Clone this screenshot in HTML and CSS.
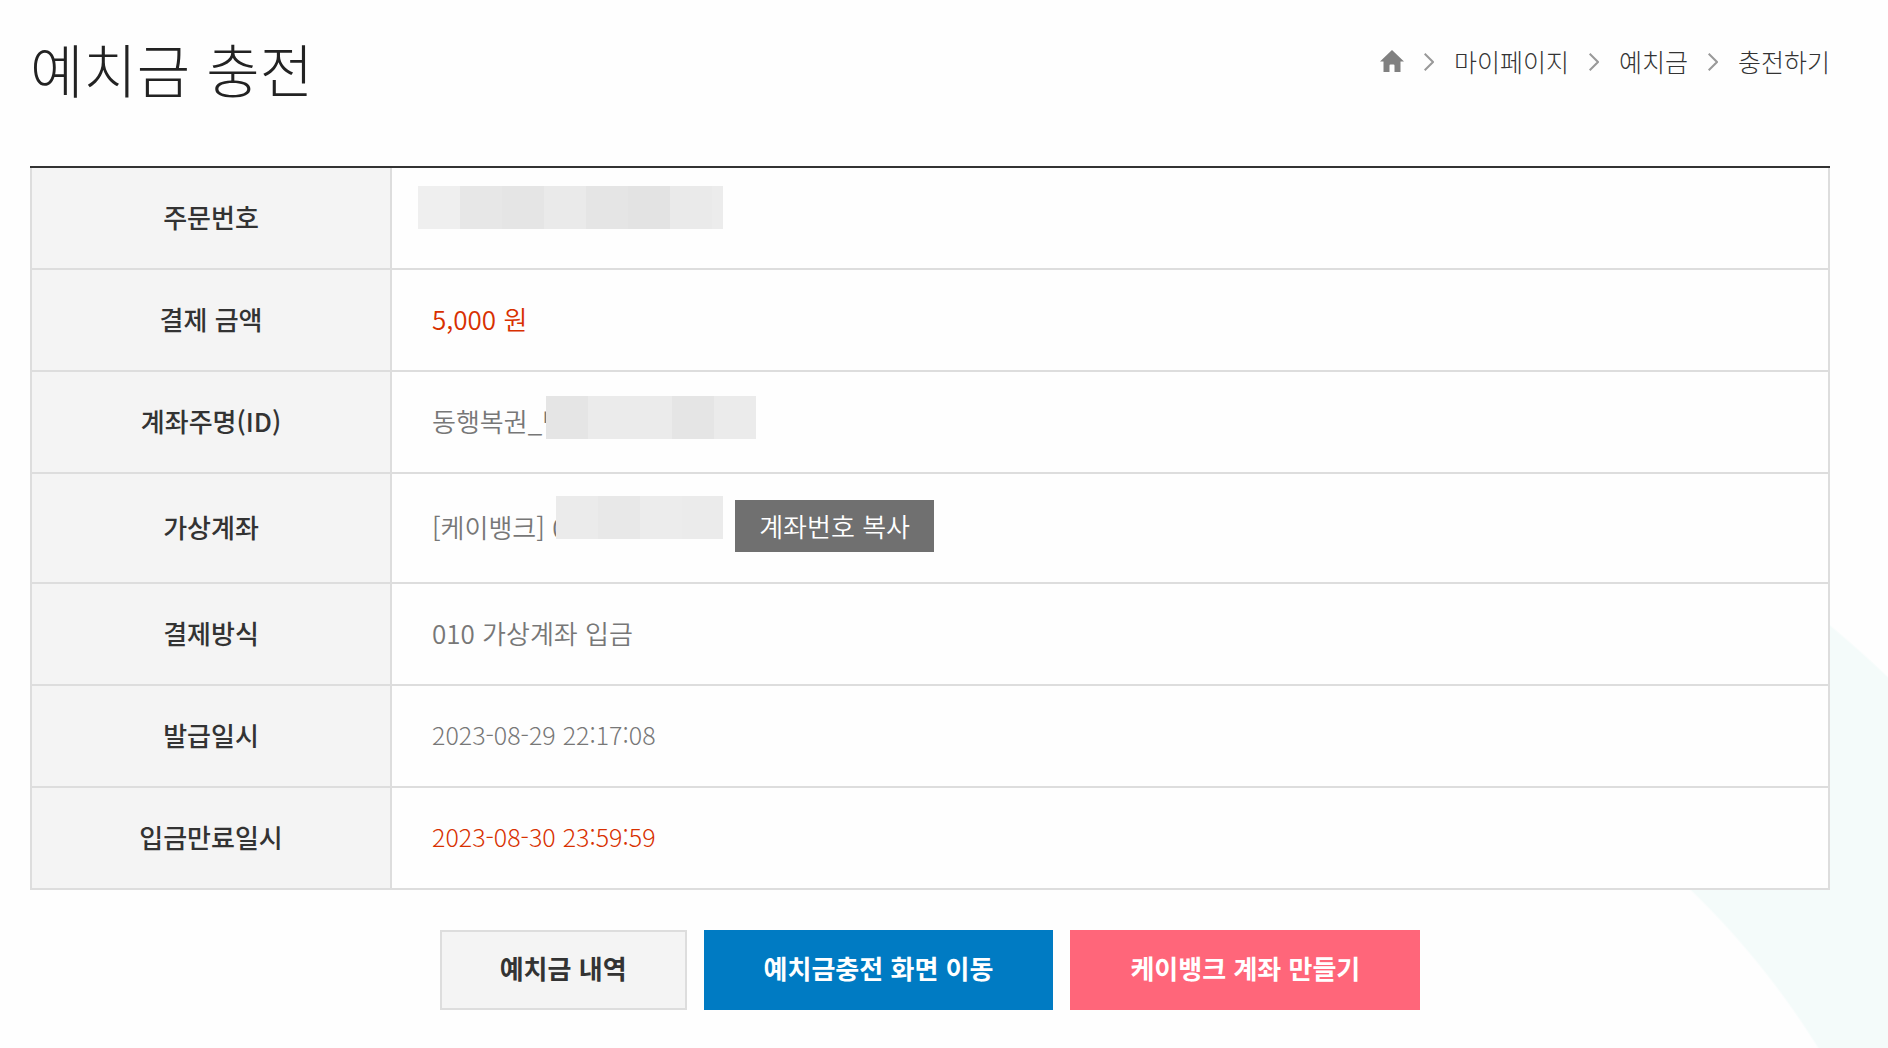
FILE: index.html
```html
<!DOCTYPE html>
<html lang="ko">
<head>
  <meta charset="UTF-8" />
  <meta name="viewport" content="width=device-width, initial-scale=1.0"/>
  <title>예치금 충전</title>
  <link rel="stylesheet" href="styles.css">
</head>
<body>

  <header class="page-header">
    <h1>예치금 충전</h1>
    <nav class="breadcrumb" aria-label="현재 위치">
      <a href="#" class="home" aria-label="홈">
        <svg width="24" height="22" viewBox="0 0 24 22"><path d="M12 0 24 11.5H20.500V22H14.500V15.500a1 1 0 0 0-1-1h-3a1 1 0 0 0-1 1V22H3.500V11.500H0z" fill="#808080"/></svg>
      </a>
      <svg class="arrow" width="10" height="18" viewBox="0 0 10 18"><path d="M.7.7 9 9 .7 17.300"/></svg>
      <a href="#">마이페이지</a>
      <svg class="arrow" width="10" height="18" viewBox="0 0 10 18"><path d="M.7.7 9 9 .7 17.300"/></svg>
      <a href="#">예치금</a>
      <svg class="arrow" width="10" height="18" viewBox="0 0 10 18"><path d="M.7.7 9 9 .7 17.300"/></svg>
      <a href="#">충전하기</a>
    </nav>
  </header>

  <main>
    <table class="charge-table">
      <tbody>
        <tr>
          <th scope="row">주문번호</th>
          <td><div class="value"><span class="mask mask-order"></span></div></td>
        </tr>
        <tr>
          <th scope="row">결제 금액</th>
          <td class="point">5,000 원</td>
        </tr>
        <tr>
          <th scope="row">계좌주명(ID)</th>
          <td><div class="value">동행복권_<span class="covered">박</span><span class="mask mask-name"></span></div></td>
        </tr>
        <tr class="account-row">
          <th scope="row">가상계좌</th>
          <td>
            <div class="value">[케이뱅크]&nbsp;<span class="covered">0</span><span class="mask mask-account"></span>
              <button type="button" class="copy-btn">계좌번호 복사</button>
            </div>
          </td>
        </tr>
        <tr>
          <th scope="row">결제방식</th>
          <td>010 가상계좌 입금</td>
        </tr>
        <tr>
          <th scope="row">발급일시</th>
          <td class="date">2023-08-29 22:17:08</td>
        </tr>
        <tr>
          <th scope="row">입금만료일시</th>
          <td class="date point">2023-08-30 23:59:59</td>
        </tr>
      </tbody>
    </table>

    <div class="btn-area">
      <a href="#" class="btn btn-gray">예치금 내역</a>
      <a href="#" class="btn btn-blue">예치금충전 화면 이동</a>
      <a href="#" class="btn btn-pink">케이뱅크 계좌 만들기</a>
    </div>
  </main>

</body>
</html>
```

FILE: styles.css
```css
* {
  box-sizing: border-box;
}

body {
  margin: 0;
  padding: 30px 58px 38px 30px;
  min-height: 100vh;
  font-family: 'Noto Sans CJK KR', 'Noto Sans', sans-serif;
  font-size: 26px;
  color: #333;
  /* pale ring in the bottom right corner */
  background: #fefefe radial-gradient(circle at -173px 1485px, transparent 827px, #f4fbfa 829px, #f4fbfa 1117px, transparent 1119px) right top / 600px 100% no-repeat;
}

a {
  color: inherit;
  text-decoration: none;
}

.page-header {
  display: flex;
  justify-content: space-between;
  align-items: flex-start;
  height: 136px;
}

h1 {
  margin: 0;
  font-size: 58px;
  font-weight: 300;
  line-height: 76px;
  color: #222;
}

.breadcrumb {
  display: flex;
  align-items: center;
  gap: 20px;
  height: 64px;
  font-size: 25px;
  font-weight: 300;
}

.breadcrumb a {
  padding-bottom: 2px;
}

.breadcrumb svg {
  display: block;
}

.arrow path {
  fill: none;
  stroke: #999;
  stroke-width: 2;
}

.charge-table {
  width: 100%;
  border-collapse: separate;
  border-spacing: 0;
  border-top: 2px solid #333;
  table-layout: fixed;
  background: #fefefe;
}

.charge-table th,
.charge-table td {
  height: 102px;
  padding: 0 40px 4px;
  border-left: 2px solid #ddd;
  border-bottom: 2px solid #ddd;
}

.charge-table th {
  width: 20%;
  background: #f4f4f4;
  font-weight: 500;
}

.charge-table td {
  border-right: 2px solid #ddd;
  font-weight: 350;
  color: #777;
}

.charge-table .account-row th,
.charge-table .account-row td {
  height: 110px;
}

.charge-table .point {
  color: #d83000;
}

.charge-table .date {
  font-size: 25px;
  font-weight: 300;
}

.value {
  display: flex;
  align-items: center;
}

/* first letter of the hidden part, the mask lies over the rest of it */
.covered {
  width: 4px;
  white-space: nowrap;
}

.mask {
  z-index: 1;
  height: 43px;
}

.mask-order {
  width: 305px;
  margin: 0 0 18px -14px;
  background: linear-gradient(90deg, #efefef 42px, #e7e7e7 42px 84px, #e5e5e5 84px 126px, #eaeaea 126px 168px, #e5e5e5 168px 210px, #e3e3e3 210px 252px, #eaeaea 252px 294px, #ececec 294px);
}

.mask-name {
  width: 210px;
  margin-bottom: 6px;
  background: linear-gradient(90deg, #e5e5e5 42px, #ebebeb 42px 126px, #e5e5e5 126px 168px, #ebebeb 168px);
}

.mask-account {
  width: 167px;
  margin-bottom: 18px;
  background: linear-gradient(90deg, #ebebeb 42px, #e8e8e8 42px 84px, #ececec 84px 126px, #ebebeb 126px);
}

.copy-btn {
  height: 52px;
  margin-left: 12px;
  padding: 0 24px;
  border: none;
  background: #707070;
  color: #fff;
  font: inherit;
  line-height: 48px;
  cursor: pointer;
}

.btn-area {
  display: flex;
  justify-content: center;
  gap: 17px;
  margin-top: 40px;
}

.btn {
  height: 80px;
  padding: 0 60px;
  font-weight: 700;
  line-height: 76px;
  color: #fff;
}

.btn-gray {
  padding: 0 58px;
  border: 2px solid #ddd;
  background: #f4f4f4;
  color: #333;
  line-height: 72px;
}

.btn-blue {
  background: #007bc3;
}

.btn-pink {
  background: #ff667a;
}
```
